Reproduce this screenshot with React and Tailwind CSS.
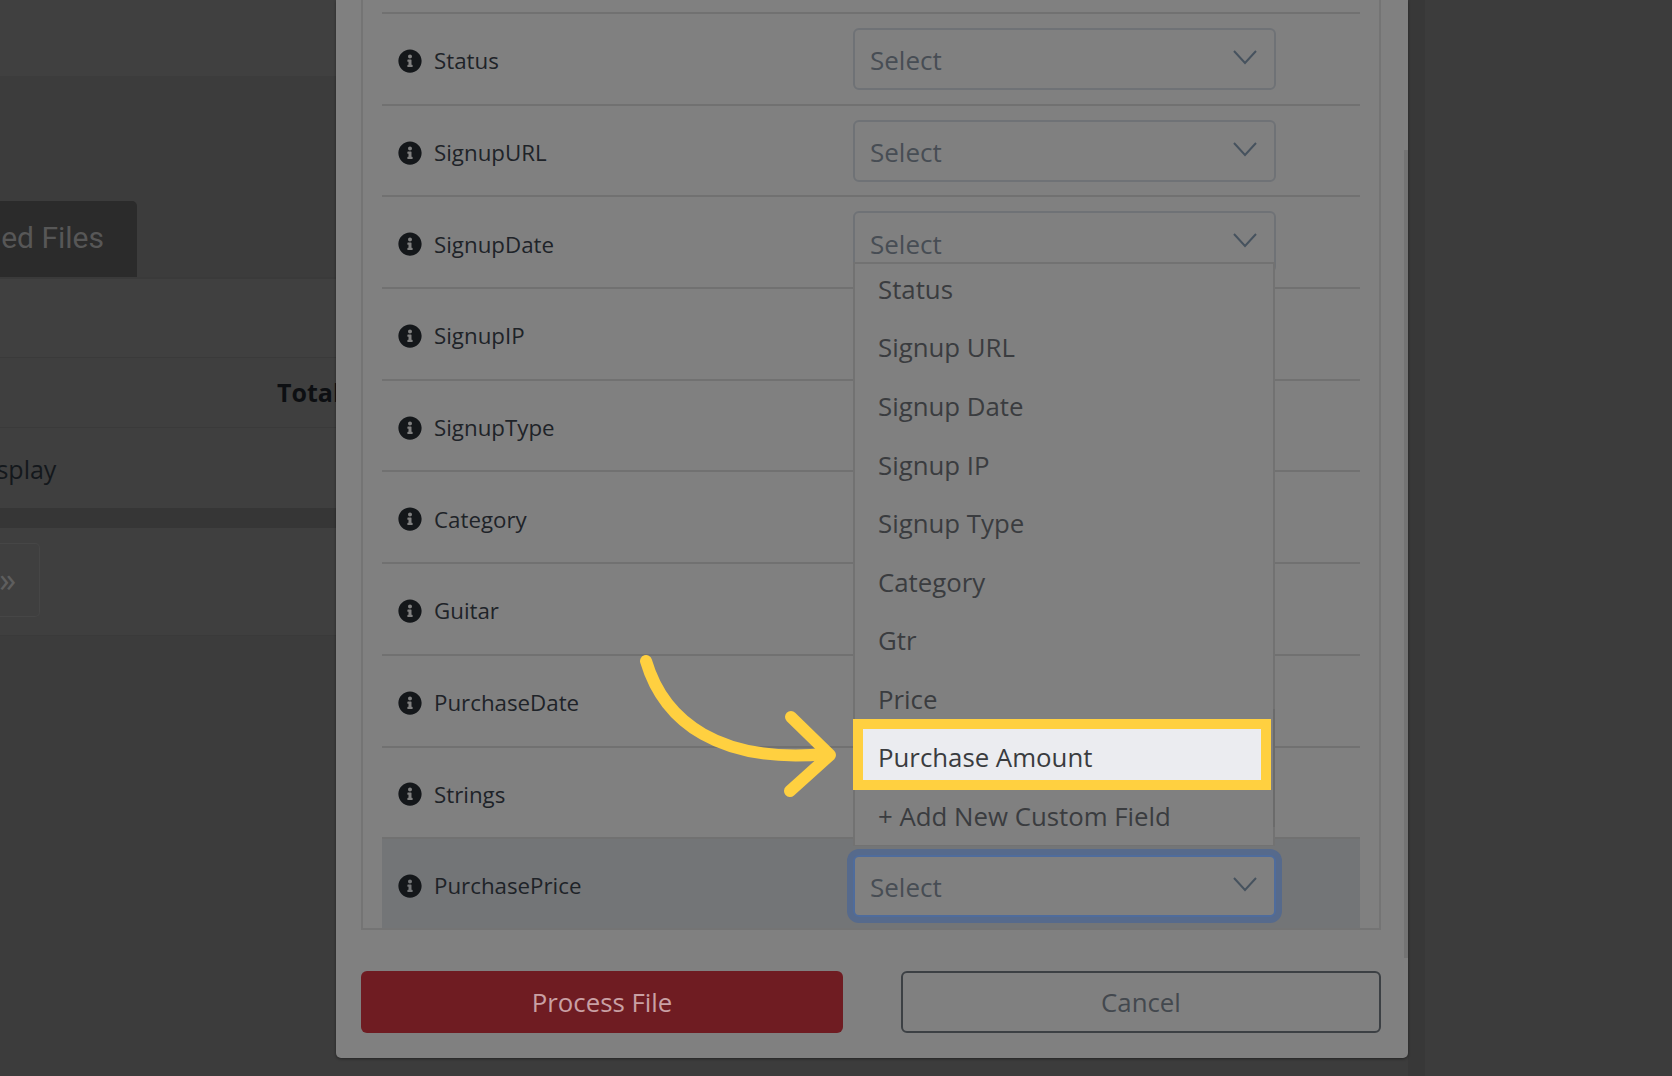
import React from 'react';
import { FaInfoCircle } from 'react-icons/fa';

const fields = ['Status', 'SignupURL', 'SignupDate', 'SignupIP', 'SignupType', 'Category', 'Guitar', 'PurchaseDate', 'Strings', 'PurchasePrice'];
const options = ['Status', 'Signup URL', 'Signup Date', 'Signup IP', 'Signup Type', 'Category', 'Gtr', 'Price', 'Purchase Amount', '+ Add New Custom Field'];

// rows 3..8 sit under the open dropdown, their selects don't show
const visibleSelects = ['Status', 'SignupURL', 'SignupDate', 'PurchasePrice'];

const Chevron = () => (
    <svg className="w-[26px] h-[16px] shrink-0" viewBox="0 0 26 16" fill="none" stroke="#46525e" strokeWidth="2">
        <path d="M2 2l11 12L24 2" />
    </svg>
);

const SelectBox = ({ focused = false }) => (
    <div className={focused
        ? 'w-[423px] h-[62px] mt-[3px] flex items-center justify-between pl-[15px] pr-[16px] rounded-[6px] border-2 border-[#4f6c9c] ring-[6px] ring-[#566a8c] bg-[#808080]'
        : 'w-[423px] h-[62px] flex items-center justify-between pl-[15px] pr-[16px] rounded-[6px] border-2 border-[#6f7276] bg-[#808080]'}>
        <span className="text-[26px] text-[#474d54] pt-[4px]">Select</span>
        <span className="-mt-[4px]"><Chevron /></span>
    </div>
);

const Row = ({ name, last }) => (
    <div className={`relative h-[91.7px] shrink-0 flex items-center border-t-2 border-[#717171] ${last ? 'bg-[#737577]' : ''}`}>
        <div className="w-[471px] flex items-center pl-[16px] gap-[12px] pt-[4px]">
            <FaInfoCircle className="text-[#14171a] text-[24px] shrink-0" />
            <span className="text-[22.3px] text-[#1e2328]">{name}</span>
        </div>
        {visibleSelects.includes(name) && <SelectBox focused={last} />}
    </div>
);

const Dropdown = () => (
    <div className="absolute left-[517px] top-[262px] w-[422px] h-[584px] bg-[#808080] border-x-2 border-t-2 border-b border-[#727272] flex flex-col">
        <div className="absolute -right-[2px] top-[445px] h-[118px] w-[2px] bg-[#6b6b6b]" />
        <div className="-mt-[4px] flex flex-col">
            {options.map((opt) => (
                <div key={opt} className="relative h-[58.56px] shrink-0 flex items-center pl-[23px] text-[25.8px] text-[#3a3c3f] whitespace-nowrap">
                    {opt === 'Purchase Amount' && (
                        <div className="absolute -left-[2px] right-[2px] top-[-9px] h-[71px] border-[10px] border-[#ffd040] bg-[#ebecf0]" />
                    )}
                    <span className="relative">{opt}</span>
                </div>
            ))}
        </div>
    </div>
);

const Modal = () => (
    <div className="absolute left-[336px] top-0 w-[1072px] h-[1058px] bg-[#808080] rounded-b-[5px] shadow-[0_1px_3px_rgba(0,0,0,0.4)] flex flex-col pl-[25px] pr-[27px]">
        <div className="absolute right-0 top-[150px] bottom-[100px] w-[4px] bg-[#747474]" />
        <div className="h-[930px] flex flex-col pl-[19px] pr-[19px] pt-[12px] border-x-2 border-b-2 border-[#747474] overflow-hidden">
            {fields.map((f, i) => (
                <Row key={f} name={f} last={i === fields.length - 1} />
            ))}
        </div>
        <div className="flex justify-between mt-[41px]">
            <button className="w-[482px] h-[62px] rounded-[6px] bg-[#6f1c22] text-[25.8px] text-[#c9a0a4]">Process File</button>
            <button className="w-[480px] h-[62px] rounded-[6px] border-2 border-[#3c4044] text-[25.8px] text-[#43484e]">Cancel</button>
        </div>
        <Dropdown />
    </div>
);

const Arrow = () => (
    <svg className="absolute left-[636px] top-[650px]" width="210" height="150" viewBox="0 0 210 150" fill="none" stroke="#ffd040" strokeWidth="12" strokeLinecap="round" strokeLinejoin="round">
        <path d="M10 11C28 72 84 114 190 104" />
        <path d="M155 67l39 38-40 36" />
    </svg>
);

const Background = () => (
    <div className="w-[336px] h-full shrink-0 flex flex-col overflow-hidden text-[#1a1a1a]">
        <div className="h-[76px] shrink-0 bg-[#404040]" />
        <div className="h-[125px] shrink-0" />
        <div className="h-[76px] w-[137px] shrink-0 bg-[#2b2b2b] rounded-tr-[5px] flex items-center justify-end pr-[33px] pb-[4px] whitespace-nowrap text-[30px] text-[#575757] font-['Roboto',sans-serif]">
            Uploaded Files
        </div>
        <div className="h-[80px] shrink-0 border-t-2 border-[#3a3a3a] bg-[#404040]" />
        <div className="h-[70px] shrink-0 pl-[277px] flex items-center whitespace-nowrap border-t border-[#3a3a3a] bg-[#3f3f3f] font-bold text-[25px] text-[#0d0f12]">
            Total
        </div>
        <div className="h-[81px] shrink-0 flex items-center justify-start whitespace-nowrap border-t border-[#3a3a3a] bg-[#3f3f3f] text-[25px] text-[#14181c]">
            <span className="-ml-[28px] mt-[4px]">Display</span>
        </div>
        <div className="h-[20px] shrink-0 bg-[#363636]" />
        <div className="h-[108px] shrink-0 border-b border-[#3a3a3a] bg-[#3f3f3f] flex items-center">
            <div className="w-[40px] h-[74px] mb-[3px] border border-l-0 border-[#464646] rounded-r-[5px] flex items-center justify-end pr-[23px] pb-[2px] text-[34px] text-[#5e5e5e]">
                »
            </div>
        </div>
    </div>
);

const App = () => (
    <div className="relative w-[1672px] h-[1076px] overflow-hidden bg-[#3c3c3c] font-['Open_Sans',sans-serif] flex">
        <Background />
        <div className="w-[1072px] shrink-0" />
        <div className="w-[17px] h-full shrink-0 bg-[#383838]" />
        <Modal />
        <Arrow />
    </div>
);

export default App;
